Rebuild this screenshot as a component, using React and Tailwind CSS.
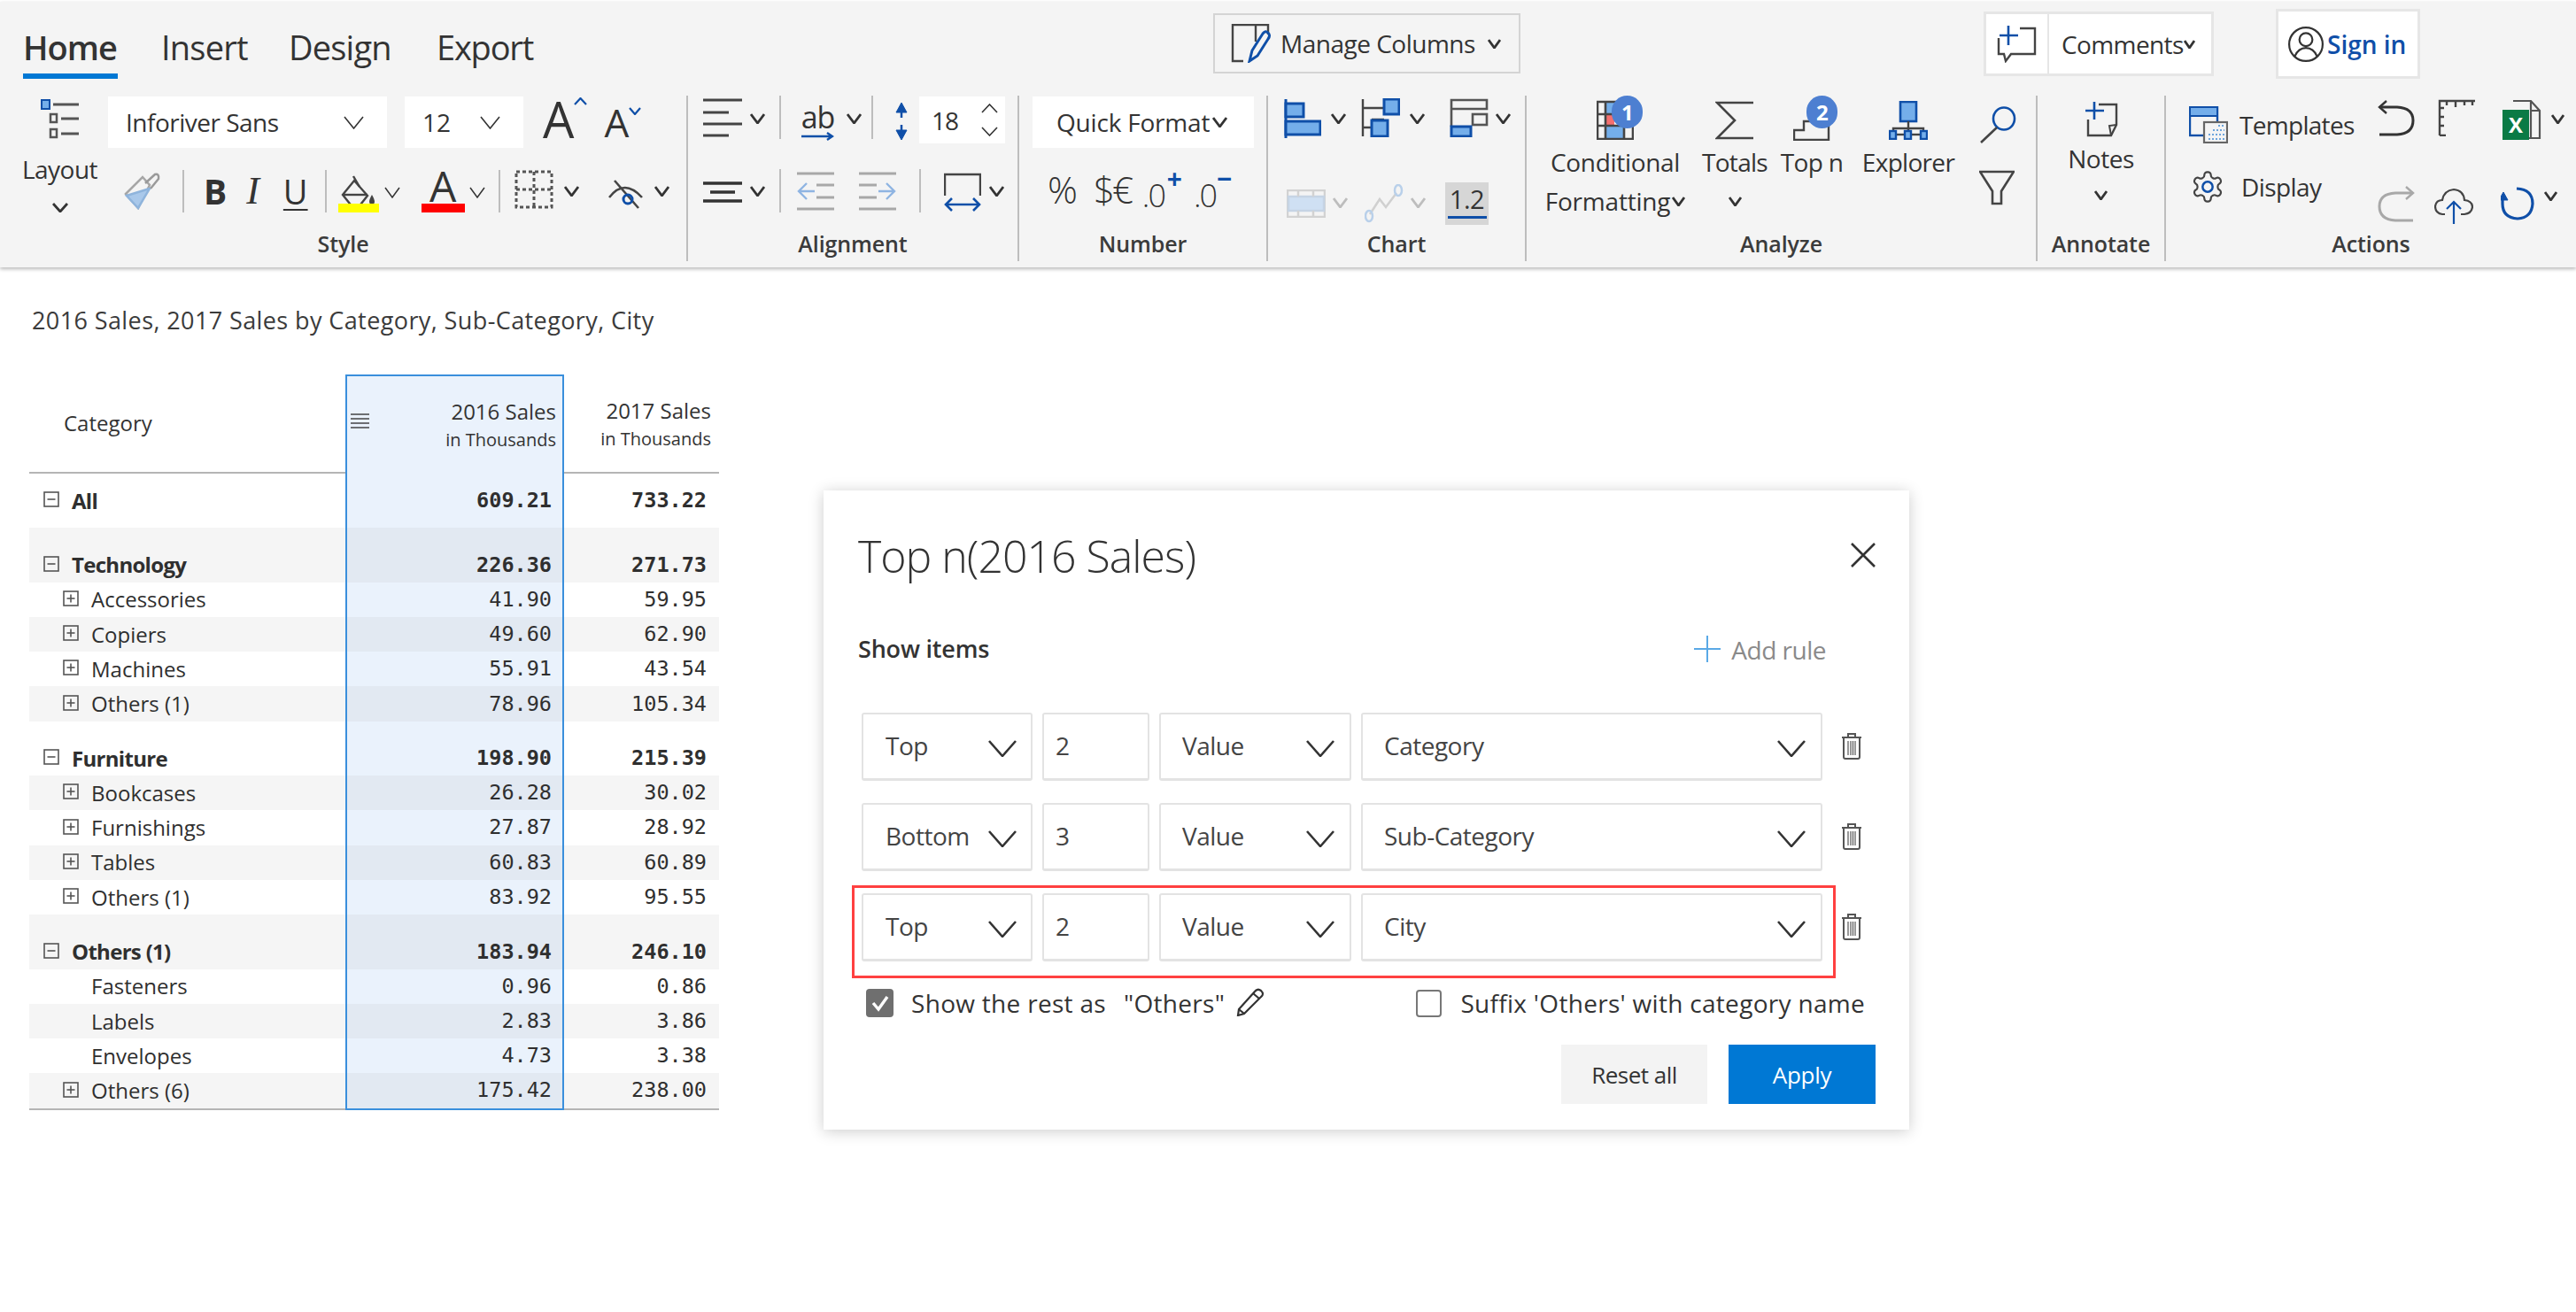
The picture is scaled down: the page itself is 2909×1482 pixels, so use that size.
import React from 'react';

const INK = '#333333';
const BLUE = '#0f4fa8';
const SKY = '#74aeea';

function Chev({ w = 15, h = 11, sw = 2.8, color = INK, up = false, className = '' }) {
    const d = up ? `M1 ${h - 1} L${w / 2} 1 L${w - 1} ${h - 1}` : `M1 1 L${w / 2} ${h - 1} L${w - 1} 1`;
    return (
        <svg width={w} height={h} className={`shrink-0 ${className}`} fill="none" stroke={color} strokeWidth={sw}>
            <path d={d} />
        </svg>
    );
}

function Sep({ className = '' }) {
    return <div className={`w-[2px] bg-[#bdbdbd] shrink-0 ${className}`} />;
}

function Group({ label, className, children }) {
    return (
        <div className={`flex flex-col h-[187px] shrink-0 ${className}`}>
            <div className="h-[147px] relative">{children}</div>
            <div className="h-[40px] flex items-center justify-center text-[25px] font-semibold leading-none text-[#3b3b3b] tracking-[-0.1px]">{label}</div>
        </div>
    );
}

function Layout1() {
    return (
        <svg width="44" height="48" fill="none" stroke="#555">
            <rect x="1" y="3" width="9" height="10" fill={SKY} stroke={BLUE} strokeWidth="2" />
            <path d="M14 8H43M23 24H43M23 41H43" strokeWidth="3" stroke="#555" />
            <rect x="11" y="19" width="7" height="9" strokeWidth="2.5" />
            <rect x="11" y="36" width="7" height="9" strokeWidth="2.5" />
        </svg>
    );
}

function Brush() {
    return (
        <svg width="42" height="42" fill="none" stroke="#9a9a9a" strokeWidth="2.5">
            <path d="M3 24 L22 5 L30 14 L17 40 Z" stroke="#a6a6a6" />
            <path d="M4 26 L30 18 L17 40 Z" fill="#a9c8ea" stroke="#8fb4dc" />
            <path d="M25 12 L36 2 Q41 1 40 7 L31 18" />
        </svg>
    );
}

function FillIcon() {
    return (
        <svg width="46" height="42">
            <g fill="none" stroke="#444" strokeWidth="2.4">
                <path d="M17 1 L24 13" />
                <path d="M5 22 L18 6 L33 23 L22 37 H17 Z" />
                <path d="M5 22 H33" />
            </g>
            <path d="M38 22 Q32 32 38 33 Q44 32 38 22Z" fill="#444" />
            <rect x="0" y="32" width="46" height="10" fill="#ffff00" />
        </svg>
    );
}

function BorderIcon() {
    return (
        <svg width="44" height="44" fill="none" stroke="#555" strokeWidth="3" strokeDasharray="4 3">
            <rect x="2" y="2" width="40" height="40" />
            <path d="M22 2V42M2 22H42" />
        </svg>
    );
}

function EyeOff() {
    return (
        <svg width="40" height="36" fill="none" stroke="#444" strokeWidth="2.6">
            <path d="M1 22 Q18 0 38 22" />
            <path d="M7 3 L34 34" />
            <circle cx="22" cy="24" r="5" stroke={BLUE} strokeWidth="3" />
        </svg>
    );
}

function AlignTop() {
    return (
        <svg width="44" height="44" stroke="#444" strokeWidth="3">
            <path d="M0 2H44M0 16H29M0 29H44M0 42H29" />
        </svg>
    );
}

function AlignMid() {
    return (
        <svg width="44" height="24" stroke="#333" strokeWidth="3.4">
            <path d="M0 2H44M8 12H36M0 22H44" />
        </svg>
    );
}

function UpDown() {
    return (
        <svg width="16" height="44" fill={BLUE} stroke={BLUE}>
            <path d="M8 1 L14 12 H2 Z" />
            <path d="M8 43 L14 32 H2 Z" />
            <path d="M8 8V18M8 26V38" strokeWidth="2.5" />
        </svg>
    );
}

function Indent({ flip = false }) {
    return (
        <svg width="42" height="44" fill="none" stroke="#a8a8a8" strokeWidth="3" className={flip ? '-scale-x-100' : ''}>
            <path d="M0 2H42M0 42H42M22 15H42M22 29H42" />
            <path d="M20 22H2M11 13L2 22L11 31" stroke="#8fb4e2" strokeWidth="2.4" />
        </svg>
    );
}

function WidthIcon() {
    return (
        <svg width="42" height="44" fill="none">
            <path d="M1 26V2H41V26" stroke="#444" strokeWidth="2.4" />
            <path d="M2 36H40M9 29L2 36L9 43M33 29L40 36L33 43" stroke={BLUE} strokeWidth="2.6" />
        </svg>
    );
}

function ChartA() {
    return (
        <svg width="42" height="44" fill={SKY} stroke={BLUE} strokeWidth="3">
            <path d="M2 0V44" fill="none" />
            <rect x="2" y="5" width="20" height="15" />
            <rect x="2" y="25" width="39" height="15" />
        </svg>
    );
}

function ChartB() {
    return (
        <svg width="44" height="44" fill={SKY} stroke="#444" strokeWidth="2.4">
            <path d="M2 1V43M2 11H26M2 33H12M12 24H26" fill="none" />
            <rect x="26" y="1" width="17" height="17" stroke={BLUE} strokeWidth="3" />
            <rect x="12" y="25" width="18" height="18" stroke={BLUE} strokeWidth="3" />
        </svg>
    );
}

function ChartC() {
    return (
        <svg width="44" height="44" fill="none" stroke="#555" strokeWidth="2.6">
            <path d="M2 22V2H42V12H2M2 12V32" />
            <rect x="26" y="18" width="16" height="12" />
            <rect x="2" y="32" width="22" height="11" fill={SKY} stroke={BLUE} strokeWidth="3" />
        </svg>
    );
}

function ChartD() {
    return (
        <svg width="44" height="32" fill="none" stroke="#d2d2d2" strokeWidth="2.5">
            <rect x="1" y="1" width="42" height="30" />
            <rect x="2" y="8" width="40" height="16" fill="#cfe0f3" stroke="#c6d4e4" />
            <path d="M13 1V8M30 1V8M13 24V31M30 24V31" />
        </svg>
    );
}

function ChartE() {
    return (
        <svg width="44" height="44" fill="none" stroke="#d0d0d0" strokeWidth="2.5">
            <path d="M6 34 L17 17 L24 26 L36 10" />
            <ellipse cx="5" cy="36" rx="4" ry="6" stroke="#b9d0ea" />
            <ellipse cx="38" cy="7" rx="4" ry="6" stroke="#b9d0ea" />
        </svg>
    );
}

function CondIcon() {
    return (
        <svg width="42" height="45" fill="none" stroke="#444" strokeWidth="2.6">
            <rect x="9" y="2" width="22" height="14" fill={SKY} stroke="none" />
            <rect x="10" y="17" width="10" height="12" fill="#f56f6f" stroke="none" />
            <rect x="10" y="30" width="21" height="14" fill={SKY} stroke="none" />
            <path d="M1 2H41V44H1ZM10 2V44M31 2V44M1 16H41M1 29H41" />
        </svg>
    );
}

function Sigma() {
    return (
        <svg width="44" height="44" fill="none" stroke="#444" strokeWidth="2.6">
            <path d="M43 2H2L22 22L2 42H43" />
        </svg>
    );
}

function Steps() {
    return (
        <svg width="42" height="24" fill="none" stroke="#444" strokeWidth="2.4">
            <path d="M1 23V12H12V2H40V23Z" />
        </svg>
    );
}

function Explorer() {
    return (
        <svg width="44" height="44" fill="none" stroke="#444" strokeWidth="2.4">
            <rect x="13" y="1" width="18" height="22" fill={SKY} stroke={BLUE} strokeWidth="2.6" />
            <path d="M22 23V31M5 36V31H39V36M22 31V36" />
            <path d="M8 38H36" />
            <rect x="1" y="34" width="7" height="9" fill={SKY} stroke={BLUE} strokeWidth="2.4" />
            <rect x="18" y="34" width="7" height="9" fill={SKY} stroke={BLUE} strokeWidth="2.4" />
            <rect x="36" y="34" width="7" height="9" fill={SKY} stroke={BLUE} strokeWidth="2.4" />
        </svg>
    );
}

function Search() {
    return (
        <svg width="42" height="42" fill="none">
            <ellipse cx="28" cy="14" rx="12" ry="12.5" stroke={BLUE} strokeWidth="2.6" />
            <path d="M20 24L2 41" stroke="#444" strokeWidth="2.6" />
        </svg>
    );
}

function Funnel() {
    return (
        <svg width="40" height="40" fill="none" stroke="#444" strokeWidth="2.6">
            <path d="M1 2H39L25 24V38H15V24Z" />
        </svg>
    );
}

function NoteIcon() {
    return (
        <svg width="38" height="40" fill="none">
            <path d="M16 3H36V26L30 38H4V20" stroke="#444" strokeWidth="2.4" />
            <path d="M30 38L28 27L36 26" stroke="#444" strokeWidth="2" />
            <path d="M11 0V20M1 10H22" stroke={BLUE} strokeWidth="2.6" />
        </svg>
    );
}

function TemplateIcon() {
    return (
        <svg width="44" height="42" fill="none">
            <rect x="1" y="1" width="31" height="32" stroke={BLUE} strokeWidth="2.4" />
            <rect x="2" y="2" width="29" height="9" fill={SKY} />
            <path d="M2 11H31" stroke={BLUE} strokeWidth="2" />
            <rect x="17" y="18" width="26" height="23" fill="#f4f4f4" stroke="#666" strokeWidth="2.2" />
            <path d="M22 37H40M22 32H40M27 27H40M33 22H40" stroke="#6ea5dc" strokeWidth="2" strokeDasharray="2 2" />
        </svg>
    );
}

function Gear() {
    return (
        <svg width="40" height="40" viewBox="0 0 24 24" fill="none" stroke="#444" strokeWidth="1.3">
            <path d="M12.22 2h-.44a2 2 0 0 0-2 2v.18a2 2 0 0 1-1 1.73l-.43.25a2 2 0 0 1-2 0l-.15-.08a2 2 0 0 0-2.73.73l-.22.38a2 2 0 0 0 .73 2.73l.15.1a2 2 0 0 1 1 1.72v.51a2 2 0 0 1-1 1.74l-.15.09a2 2 0 0 0-.73 2.73l.22.38a2 2 0 0 0 2.73.73l.15-.08a2 2 0 0 1 2 0l.43.25a2 2 0 0 1 1 1.73V20a2 2 0 0 0 2 2h.44a2 2 0 0 0 2-2v-.18a2 2 0 0 1 1-1.73l.43-.25a2 2 0 0 1 2 0l.15.08a2 2 0 0 0 2.73-.73l.22-.39a2 2 0 0 0-.73-2.73l-.15-.08a2 2 0 0 1-1-1.74v-.5a2 2 0 0 1 1-1.74l.15-.09a2 2 0 0 0 .73-2.73l-.22-.38a2 2 0 0 0-2.73-.73l-.15.08a2 2 0 0 1-2 0l-.43-.25a2 2 0 0 1-1-1.73V4a2 2 0 0 0-2-2z" />
            <circle cx="12" cy="12" r="3.4" stroke={BLUE} strokeWidth="1.5" />
        </svg>
    );
}

function Undo({ redo = false }) {
    const c = redo ? '#a8a8a8' : '#333';
    return (
        <svg width="42" height="42" fill="none" stroke={c} strokeWidth="3" className={redo ? '-scale-x-100' : ''}>
            <path d="M2 9H22Q40 10 40 24Q40 39 22 40H2" />
            <path d="M10 2L2 9L10 16" strokeWidth="2.4" />
        </svg>
    );
}

function Ruler() {
    return (
        <svg width="43" height="42" fill="none" stroke="#444" strokeWidth="2.4">
            <path d="M2 41V2H42" />
            <path d="M9 41H2M2 30H7M2 20H7M2 10H7M10 2V7M20 2V9M30 2V7M39 2V7" />
        </svg>
    );
}

function Excel() {
    return (
        <div className="relative w-[44px] h-[46px]">
            <svg width="44" height="46" fill="none" stroke="#555" strokeWidth="2.2">
                <path d="M12 2H32L42 13V44H24" />
                <path d="M32 2V13H42M32 13V44" />
            </svg>
            <div className="absolute left-0 top-[12px] w-[30px] h-[34px] bg-[#0a7a45] text-white font-bold text-[24px] leading-[34px] text-center">X</div>
        </div>
    );
}

function Cloud() {
    return (
        <svg width="44" height="42" fill="none" stroke="#444" strokeWidth="2.2">
            <path d="M12 30H9Q1 29 1 21Q2 14 9 14Q11 3 22 2Q33 3 34 14Q43 15 43 22Q42 29 34 30H30" />
            <path d="M22 41V16M14 24L22 16L30 24" stroke={BLUE} />
        </svg>
    );
}

function Refresh() {
    return (
        <svg width="38" height="38" fill="none" stroke={BLUE} strokeWidth="3.2">
            <path d="M18 2Q36 3 36 19Q35 35 19 36Q2 35 2 19V15" />
            <path d="M-2 15H8L3 6Z" fill={BLUE} strokeWidth="1" />
        </svg>
    );
}

function Ribbon() {
    return (
        <div className="mt-[2px] h-[300px] bg-[#f4f4f4] shadow-[0_2px_4px_rgba(0,0,0,0.28)] relative z-10">
            <div className="flex items-start h-[106px]">
                <nav className="w-[1370px] shrink-0 flex items-start text-[38px] leading-[48px] text-[#333]">
                    <div className="ml-[26px] mt-[27px] w-[156px]">
                        <div className="w-[107px] font-semibold tracking-[-1px]">Home</div>
                        <div className="w-[107px] h-[6px] mt-[6px] bg-[#0078d4]" />
                    </div>
                    <div className="mt-[27px] w-[144px] tracking-[-0.8px]">Insert</div>
                    <div className="mt-[27px] w-[167px] tracking-[-0.8px]">Design</div>
                    <div className="mt-[27px] tracking-[-1.2px]">Export</div>
                </nav>
                <div className="mt-[13px] w-[347px] h-[68px] border-2 border-[#d4d4d4] flex items-center text-[28px] text-[#333] shrink-0">
                    <svg width="46" height="44" fill="none" className="ml-[18px] shrink-0">
                        <path d="M14 42H2V1H42V12M28 1V20" stroke="#444" strokeWidth="2.4" />
                        <path d="M21 42L24 30L36 11Q39 7 42 10Q45 13 42 17L30 36Z" stroke={BLUE} strokeWidth="3" />
                    </svg>
                    <span className="ml-[10px] tracking-[-0.5px] whitespace-nowrap">Manage Columns</span>
                    <Chev className="ml-[14px]" />
                </div>
                <div className="ml-[523px] mt-[11px] w-[260px] h-[73px] border-[3px] border-[#e6e6e6] bg-white flex items-center text-[28px] text-[#333] shrink-0">
                    <div className="w-[71px] h-full border-r-2 border-[#e6e6e6] flex items-center justify-center">
                        <svg width="46" height="42" fill="none">
                            <path d="M26 3H43V32H16L10 40L8 32H2V14" stroke="#444" strokeWidth="2.4" />
                            <path d="M13 0V22M3 11H24" stroke={BLUE} strokeWidth="2.6" />
                        </svg>
                    </div>
                    <span className="ml-[14px] tracking-[-0.6px]">Comments</span>
                    <Chev w={13} h={10} />
                </div>
                <div className="ml-[70px] mt-[8px] w-[163px] h-[79px] border-[3px] border-[#e6e6e6] bg-white flex items-center shrink-0">
                    <svg width="42" height="42" viewBox="0 0 40 40" fill="none" stroke="#333" strokeWidth="2.1" className="ml-[10px] shrink-0">
                        <circle cx="20" cy="20" r="18" />
                        <circle cx="20" cy="15" r="7" />
                        <path d="M8 33Q12 24 20 24Q28 24 32 33" />
                    </svg>
                    <span className="ml-[3px] text-[28px] font-semibold text-[#0f4fa8] tracking-[0px]">Sign in</span>
                </div>
            </div>

            <div className="flex">
                {/* Style */}
                <Group label="Style" className="w-[777px] border-r-2 border-[#bdbdbd]">
                    <div className="flex">
                        <div className="ml-[25px] w-[85px] flex flex-col items-center text-[28px] text-[#333]">
                            <div className="mt-[2px]"><Layout1 /></div>
                            <div className="leading-[36px] mt-[15px] tracking-[-0.5px]">Layout</div>
                            <Chev className="mt-[20px]" w={18} h={11} />
                        </div>
                        <div className="flex flex-col">
                            <div className="flex items-start h-[82px] text-[#333]">
                                <div className="ml-[12px] mt-[1px] w-[315px] h-[58px] bg-white flex items-center justify-between pl-[20px] pr-[26px] text-[28px] tracking-[-0.5px]">
                                    <span>Inforiver Sans</span>
                                    <Chev w={23} h={15} sw={1.6} />
                                </div>
                                <div className="ml-[20px] mt-[1px] w-[134px] h-[58px] bg-white flex items-center justify-between pl-[20px] pr-[26px] text-[28px]">
                                    <span>12</span>
                                    <Chev w={23} h={15} sw={1.6} />
                                </div>
                                <div className="ml-[22px] -mt-[7px] flex items-start">
                                    <span className="text-[56px] leading-[66px]">A</span>
                                    <Chev up w={15} h={9} sw={2.2} color={BLUE} className="mt-[9px]" />
                                </div>
                                <div className="ml-[19px] -mt-[7px] flex items-start">
                                    <span className="text-[44px] leading-[64px] mt-[5px]">A</span>
                                    <Chev w={14} h={9} sw={2.2} color={BLUE} className="mt-[20px]" />
                                </div>
                            </div>
                            <div className="flex items-start h-[65px] text-[#333]">
                                <div className="ml-[29px] mt-[5px]"><Brush /></div>
                                <Sep className="ml-[25px] mt-[2px] h-[48px]" />
                                <span className="ml-[22px] mt-[4px] text-[39px] leading-[44px] font-bold">B</span>
                                <span className="ml-[22px] mt-[4px] text-[44px] leading-[44px] font-['Liberation_Serif'] italic">I</span>
                                <span className="ml-[27px] mt-[4px] text-[38px] leading-[44px] underline underline-offset-[5px] decoration-2">U</span>
                                <Sep className="ml-[19px] mt-[2px] h-[48px]" />
                                <div className="ml-[13px] mt-[8px]"><FillIcon /></div>
                                <Chev w={18} h={13} sw={1.5} className="ml-[6px] mt-[21px]" />
                                <div className="ml-[24px] flex flex-col items-center w-[49px]">
                                    <span className="text-[48px] leading-[40px] mt-[0px] h-[40px]">A</span>
                                    <div className="w-[49px] h-[10px] bg-[#ff0000]" />
                                </div>
                                <Chev w={18} h={13} sw={1.5} className="ml-[5px] mt-[21px]" />
                                <Sep className="ml-[15px] mt-[2px] h-[48px]" />
                                <div className="ml-[16px] mt-[2px]"><BorderIcon /></div>
                                <Chev w={17} h={12} className="ml-[12px] mt-[20px]" />
                                <div className="ml-[33px] mt-[11px]"><EyeOff /></div>
                                <Chev w={17} h={12} className="ml-[12px] mt-[20px]" />
                            </div>
                        </div>
                    </div>
                </Group>

                {/* Alignment */}
                <Group label="Alignment" className="w-[374px] border-r-2 border-[#bdbdbd]">
                    <div className="flex items-start h-[82px] text-[#333]">
                        <div className="ml-[17px] mt-[3px]"><AlignTop /></div>
                        <Chev className="ml-[9px] mt-[20px]" w={17} h={12} />
                        <Sep className="ml-[16px] h-[49px]" />
                        <div className="ml-[23px] flex flex-col items-center w-[37px]">
                            <span className="text-[34px] leading-[36px] mt-[6px] tracking-[-1px]">ab</span>
                            <svg width="37" height="10" fill="none" stroke={BLUE} strokeWidth="2.4" className="-mt-[1px]"><path d="M0 5H35M29 1L35 5L29 9" /></svg>
                        </div>
                        <Chev className="ml-[14px] mt-[20px]" w={17} h={12} />
                        <Sep className="ml-[11px] h-[49px]" />
                        <div className="ml-[24px] mt-[7px]"><UpDown /></div>
                        <div className="ml-[12px] mt-[1px] w-[97px] h-[53px] bg-white flex items-center justify-between pl-[14px] pr-[8px] text-[28px]">
                            <span className="tracking-[-1px]">18</span>
                            <div className="flex flex-col gap-[15px]">
                                <Chev up w={19} h={11} sw={1.6} />
                                <Chev w={19} h={11} sw={1.6} />
                            </div>
                        </div>
                    </div>
                    <div className="flex items-start">
                        <div className="ml-[17px] mt-[15px]"><AlignMid /></div>
                        <Chev className="ml-[9px] mt-[20px]" w={17} h={12} />
                        <Sep className="ml-[16px] mt-[1px] h-[49px]" />
                        <div className="ml-[18px] mt-[4px]"><Indent /></div>
                        <div className="ml-[28px] mt-[4px]"><Indent flip /></div>
                        <Sep className="ml-[26px] mt-[1px] h-[49px]" />
                        <div className="ml-[26px] mt-[5px]"><WidthIcon /></div>
                        <Chev className="ml-[9px] mt-[20px]" w={17} h={12} />
                    </div>
                </Group>

                {/* Number */}
                <Group label="Number" className="w-[281px] border-r-2 border-[#bdbdbd]">
                    <div className="h-[82px]">
                        <div className="ml-[15px] mt-[1px] w-[250px] h-[58px] bg-white flex items-center pl-[27px] text-[28px] text-[#333]">
                            <span className="tracking-[-0.2px] whitespace-nowrap">Quick Format</span>
                            <Chev className="ml-[3px]" w={17} h={12} />
                        </div>
                    </div>
                    <div className="flex items-start text-[#333] font-light">
                        <span className="ml-[32px] -mt-[2px] text-[42px] leading-[50px]">%</span>
                        <span className="ml-[18px] -mt-[2px] text-[42px] leading-[50px] tracking-[-3px]">$€</span>
                        <span className="ml-[13px] mt-[5px] text-[36px] leading-[50px] tracking-[-2px] relative">.0<span className="absolute -top-[12px] -right-[18px] text-[30px] font-bold text-[#0f4fa8] leading-[36px]">+</span></span>
                        <span className="ml-[33px] mt-[5px] text-[36px] leading-[50px] tracking-[-2px] relative">.0<span className="absolute -top-[12px] -right-[16px] text-[30px] font-bold text-[#0f4fa8] leading-[36px]">−</span></span>
                    </div>
                </Group>

                {/* Chart */}
                <Group label="Chart" className="w-[292px] border-r-2 border-[#bdbdbd]">
                    <div className="flex items-start h-[82px]">
                        <div className="ml-[18px] mt-[4px]"><ChartA /></div>
                        <Chev className="ml-[11px] mt-[20px]" w={17} h={12} />
                        <div className="ml-[17px] mt-[3px]"><ChartB /></div>
                        <Chev className="ml-[11px] mt-[20px]" w={17} h={12} />
                        <div className="ml-[28px] mt-[3px]"><ChartC /></div>
                        <Chev className="ml-[8px] mt-[20px]" w={17} h={12} />
                    </div>
                    <div className="flex items-start">
                        <div className="ml-[21px] mt-[24px]"><ChartD /></div>
                        <Chev className="ml-[8px] mt-[33px]" w={17} h={12} color="#bdbdbd" />
                        <div className="ml-[19px] mt-[18px]"><ChartE /></div>
                        <Chev className="ml-[8px] mt-[33px]" w={17} h={12} color="#bdbdbd" />
                        <div className="ml-[22px] mt-[16px] w-[49px] h-[48px] bg-[#d6d6d6] flex flex-col items-center">
                            <span className="text-[29px] leading-[36px] mt-[1px] text-[#333] tracking-[-0.5px]">1.2</span>
                            <div className="w-[44px] h-[3px] bg-[#0f4fa8] mt-[1px]" />
                        </div>
                    </div>
                </Group>

                {/* Analyze */}
                <Group label="Analyze" className="w-[577px] border-r-2 border-[#bdbdbd]">
                    <div className="flex items-start text-[28px] leading-[44px] text-[#333] tracking-[-0.7px]">
                        <div className="w-[190px] ml-[5px] flex flex-col items-center">
                            <div className="relative mt-[5px] h-[45px]">
                                <CondIcon />
                                <div className="absolute left-[17px] -top-[5px] w-[35px] h-[37px] rounded-full bg-[#4d7fd1] text-white font-bold text-[24px] leading-[37px] text-center">1</div>
                            </div>
                            <div className="mt-[3px] whitespace-nowrap tracking-[-0.3px]">Conditional</div>
                            <div className="flex items-center tracking-[-0.2px]">
                                <span>Formatting</span>
                                <Chev className="ml-[2px]" w={15} h={11} />
                            </div>
                        </div>
                        <div className="w-[74px] ml-[3px] flex flex-col items-center">
                            <div className="mt-[6px] h-[44px]"><Sigma /></div>
                            <div className="mt-[3px]">Totals</div>
                            <Chev className="mt-[17px]" w={15} h={11} />
                        </div>
                        <div className="w-[72px] ml-[14px] flex flex-col items-center">
                            <div className="relative mt-[27px] h-[23px] w-[42px]">
                                <Steps />
                                <div className="absolute left-[15px] -top-[27px] w-[35px] h-[37px] rounded-full bg-[#4d7fd1] text-white font-bold text-[24px] leading-[37px] text-center">2</div>
                            </div>
                            <div className="mt-[3px] whitespace-nowrap">Top n</div>
                        </div>
                        <div className="w-[104px] ml-[21px] flex flex-col items-center">
                            <div className="mt-[6px] h-[44px]"><Explorer /></div>
                            <div className="mt-[3px]">Explorer</div>
                        </div>
                        <div className="ml-[28px] flex flex-col">
                            <div className="mt-[12px]"><Search /></div>
                            <div className="mt-[30px]"><Funnel /></div>
                        </div>
                    </div>
                </Group>

                {/* Annotate */}
                <Group label="Annotate" className="w-[145px] border-r-2 border-[#bdbdbd]">
                    <div className="flex flex-col items-center text-[28px] text-[#333] tracking-[-0.5px]">
                        <div className="mt-[7px] h-[40px]"><NoteIcon /></div>
                        <div className="mt-[2px] leading-[44px]">Notes</div>
                        <Chev className="mt-[14px]" w={15} h={11} />
                    </div>
                </Group>

                {/* Actions */}
                <Group label="Actions" className="w-[463px]">
                    <div className="flex items-start text-[28px] text-[#333]">
                        <div className="ml-[26px] flex flex-col w-[213px]">
                            <div className="flex items-center mt-[12px] h-[42px]">
                                <TemplateIcon />
                                <span className="ml-[13px] tracking-[-0.7px]">Templates</span>
                            </div>
                            <div className="flex items-center mt-[29px] h-[40px]">
                                <div className="ml-[1px]"><Gear /></div>
                                <span className="ml-[18px] tracking-[-0.6px]">Display</span>
                            </div>
                        </div>
                        <div className="flex flex-col">
                            <div className="flex items-start mt-[4px] h-[46px]">
                                <Undo />
                                <div className="ml-[26px]"><Ruler /></div>
                                <div className="ml-[30px]"><Excel /></div>
                                <Chev className="ml-[11px] mt-[17px]" w={15} h={11} />
                            </div>
                            <div className="flex items-start mt-[51px]">
                                <Undo redo />
                                <div className="ml-[22px] mt-[3px]"><Cloud /></div>
                                <div className="ml-[31px] mt-[2px]"><Refresh /></div>
                                <Chev className="ml-[11px] mt-[7px]" w={15} h={11} />
                            </div>
                        </div>
                    </div>
                </Group>
            </div>
        </div>
    );
}

const rows = [
    { label: 'All', a: '609.21', b: '733.22', kind: 'all', box: '-' },
    { label: 'Technology', a: '226.36', b: '271.73', kind: 'group', box: '-', alt: true },
    { label: 'Accessories', a: '41.90', b: '59.95', box: '+' },
    { label: 'Copiers', a: '49.60', b: '62.90', box: '+', alt: true },
    { label: 'Machines', a: '55.91', b: '43.54', box: '+' },
    { label: 'Others (1)', a: '78.96', b: '105.34', box: '+', alt: true },
    { label: 'Furniture', a: '198.90', b: '215.39', kind: 'group', box: '-' },
    { label: 'Bookcases', a: '26.28', b: '30.02', box: '+', alt: true },
    { label: 'Furnishings', a: '27.87', b: '28.92', box: '+' },
    { label: 'Tables', a: '60.83', b: '60.89', box: '+', alt: true },
    { label: 'Others (1)', a: '83.92', b: '95.55', box: '+' },
    { label: 'Others (1)', a: '183.94', b: '246.10', kind: 'group', box: '-', alt: true },
    { label: 'Fasteners', a: '0.96', b: '0.86' },
    { label: 'Labels', a: '2.83', b: '3.86', alt: true },
    { label: 'Envelopes', a: '4.73', b: '3.38' },
    { label: 'Others (6)', a: '175.42', b: '238.00', box: '+', alt: true, last: true },
];

function Box({ type }) {
    return (
        <svg width="18" height="18" fill="none" stroke="#555" strokeWidth="1.6" className="shrink-0 -mt-[3px]">
            <rect x="1" y="1" width="16" height="16" />
            <path d="M4.5 9H13.5" />
            {type === '+' && <path d="M9 4.5V13.5" />}
        </svg>
    );
}

function TableRow({ row }) {
    const isTop = row.kind === 'group' || row.kind === 'all';
    const height = isTop ? 'h-[61.3px]' : 'h-[39.3px]';
    const align = row.kind === 'group' ? 'items-end' : 'items-center';
    const inner = row.kind === 'group' ? 'h-[39.3px] pt-[1px]' : 'h-full';
    const weight = isTop ? 'font-bold tracking-[-0.7px]' : 'font-normal tracking-[0px]';
    const num = isTop ? 'font-bold' : 'font-normal';
    return (
        <div className={`flex ${height} ${row.alt ? 'bg-[#f5f5f5]' : 'bg-white'} ${row.last ? 'border-b-2 border-[#b5b5b5] box-content' : ''}`}>
            <div className={`w-[357px] flex ${align}`}>
                <div className={`flex items-center ${inner} ${isTop ? 'pl-[16px]' : 'pl-[38px]'} text-[24px] text-[#2f2f2f] ${weight}`}>
                    {row.box ? <Box type={row.box} /> : <div className="w-[18px]" />}
                    <span className="ml-[14px] whitespace-nowrap">{row.label}</span>
                </div>
            </div>
            <div className={`w-[247px] flex ${align} justify-end pr-[12px] border-x-2 border-[#3a8fdc] ${row.alt ? 'bg-[#e2e9f2]' : 'bg-[#eaf2fc]'} ${row.last ? 'border-b-2 -mb-[2px]' : ''}`}>
                <div className={`flex items-center ${inner} font-['DejaVu_Sans_Mono'] text-[23.5px] text-[#2f2f2f] ${num}`}>{row.a}</div>
            </div>
            <div className={`w-[175px] flex ${align} justify-end pr-[14px]`}>
                <div className={`flex items-center ${inner} font-['DejaVu_Sans_Mono'] text-[23.5px] text-[#2f2f2f] ${num}`}>{row.b}</div>
            </div>
        </div>
    );
}

function SalesTable() {
    return (
        <div className="ml-[33px] w-[779px] shrink-0">
            <div className="mt-[40px] h-[40px] pl-[3px] flex items-center text-[27px] text-[#3b3b3b] tracking-[0.4px] whitespace-nowrap">2016 Sales, 2017 Sales by Category, Sub-Category, City</div>
            <div className="mt-[41px] flex h-[112px] border-b-2 border-[#b5b5b5] text-[#333]">
                <div className="w-[357px] pl-[39px] flex items-center text-[24px] tracking-[0px] pb-[1px]">Category</div>
                <div className="w-[247px] -mb-[2px] border-x-2 border-t-2 border-[#3a8fdc] bg-[#eaf2fc] relative flex flex-col items-end pr-[7px] pt-[22px]">
                    <svg width="21" height="19" stroke="#444" strokeWidth="1.6" className="absolute left-[4px] top-[41px]"><path d="M0 2H21M0 7H21M0 12H21M0 17H21" /></svg>
                    <div className="text-[24px] leading-[36px] tracking-[0px]">2016 Sales</div>
                    <div className="text-[20px] leading-[28px] tracking-[0px]">in Thousands</div>
                </div>
                <div className="w-[175px] flex flex-col items-end pr-[9px] pt-[23px]">
                    <div className="text-[24px] leading-[36px] tracking-[0px]">2017 Sales</div>
                    <div className="text-[20px] leading-[28px] tracking-[0px]">in Thousands</div>
                </div>
            </div>
            {rows.map((row, i) => <TableRow key={i} row={row} />)}
        </div>
    );
}

function Field({ width, pad, text, chev, gapRight }) {
    return (
        <div className={`${width} ${pad} h-[77px] shrink-0 rounded-[3px] border-2 border-[#e3e3e3] border-b-[3px] bg-white flex items-center justify-between text-[28px] text-[#444] ${gapRight}`}>
            <span className="tracking-[-0.5px] -mt-[3px] whitespace-nowrap">{text}</span>
            {chev && <Chev w={32} h={19} sw={2.6} className="mt-[5px]" />}
        </div>
    );
}

function Trash() {
    return (
        <svg width="24" height="30" fill="none" stroke="#555" strokeWidth="2" className="ml-[21px] shrink-0 -mt-[2px]">
            <path d="M1 5H23M8 5V1H16V5" />
            <path d="M3 5V27Q3 29 5 29H19Q21 29 21 27V5" />
            <path d="M8 9V25M11 9V25M13.5 9V25M16 9V25" strokeWidth="1.2" />
        </svg>
    );
}

function RuleRow({ kind, n, field, highlight }) {
    return (
        <div className="relative flex items-center">
            <Field width="w-[193px]" pad="pl-[25px] pr-[16px]" text={kind} chev />
            <Field width="w-[121px] ml-[11px]" pad="pl-[13px]" text={n} />
            <Field width="w-[217px] ml-[11px]" pad="pl-[24px] pr-[17px]" text="Value" chev />
            <Field width="w-[521px] ml-[11px]" pad="pl-[24px] pr-[17px]" text={field} chev />
            <Trash />
            {highlight && <div className="absolute -left-[11px] -top-[9px] w-[1111px] h-[105px] border-[3px] border-[#ff4040]" />}
        </div>
    );
}

function TopNDialog() {
    return (
        <div className="ml-[118px] mt-[252px] w-[1226px] h-[722px] shrink-0 bg-white shadow-[0_2px_16px_rgba(0,0,0,0.2)] pt-[46px]">
            <div className="flex items-center justify-between pl-[39px] pr-[38px] h-[56px]">
                <div className="text-[50px] leading-[56px] font-light text-[#333] tracking-[-1px] whitespace-nowrap">Top n(2016 Sales)</div>
                <svg width="28" height="28" stroke="#333" strokeWidth="2.6" className="-mt-[3px]"><path d="M1 1L27 27M27 1L1 27" /></svg>
            </div>
            <div className="mt-[57px] h-[40px] flex items-center justify-between pl-[39px] pr-[94px]">
                <div className="text-[27px] font-semibold text-[#333] tracking-[-0.2px]">Show items</div>
                <div className="flex items-center">
                    <svg width="30" height="30" stroke="#5aa9e6" strokeWidth="2"><path d="M15 0V30M0 15H30" /></svg>
                    <span className="ml-[12px] mt-[2px] text-[28px] text-[#8a8a8a] tracking-[-0.5px]">Add rule</span>
                </div>
            </div>
            <div className="mt-[52px] pl-[43px] flex flex-col gap-[25px]">
                <RuleRow kind="Top" n="2" field="Category" />
                <RuleRow kind="Bottom" n="3" field="Sub-Category" />
                <RuleRow kind="Top" n="2" field="City" highlight />
            </div>
            <div className="mt-[31px] h-[32px] flex items-center pl-[48px] pr-[50px] text-[28px] text-[#333] font-medium tracking-[0.3px]">
                <div className="w-[31px] h-[32px] rounded-[4px] bg-[#6f6f6f] flex items-center justify-center">
                    <svg width="20" height="20" fill="none" stroke="#fff" strokeWidth="3.4"><path d="M2 10L8 17L18 3" /></svg>
                </div>
                <span className="ml-[20px] whitespace-nowrap">Show the rest as</span>
                <span className="ml-[20px] whitespace-nowrap">"Others"</span>
                <svg width="32" height="32" fill="none" stroke="#333" strokeWidth="2.2" className="ml-[13px] shrink-0 -mt-[3px]">
                    <path d="M3 24L21 4Q24 0 28 3Q32 7 28 10L9 29L2 31Z" />
                    <path d="M3 24L9 29M19 6L26 12" />
                </svg>
                <div className="ml-auto w-[29px] h-[31px] rounded-[4px] border-2 border-[#777]" />
                <span className="ml-[21px] whitespace-nowrap">Suffix 'Others' with category name</span>
            </div>
            <div className="mt-[31px] flex justify-end gap-[24px] pr-[38px] text-[26px]">
                <div className="w-[165px] h-[67px] pt-[2px] bg-[#f3f3f3] flex items-center justify-center font-medium text-[#333] tracking-[-0.5px]">Reset all</div>
                <div className="w-[166px] h-[67px] pt-[2px] bg-[#0078d4] flex items-center justify-center font-medium text-white tracking-[-0.3px]">Apply</div>
            </div>
        </div>
    );
}

export default function App() {
    return (
        <div className="w-[2909px] h-[1482px] overflow-hidden bg-white font-['Open_Sans',sans-serif]">
            <Ribbon />
            <div className="flex items-start">
                <SalesTable />
                <TopNDialog />
            </div>
        </div>
    );
}
